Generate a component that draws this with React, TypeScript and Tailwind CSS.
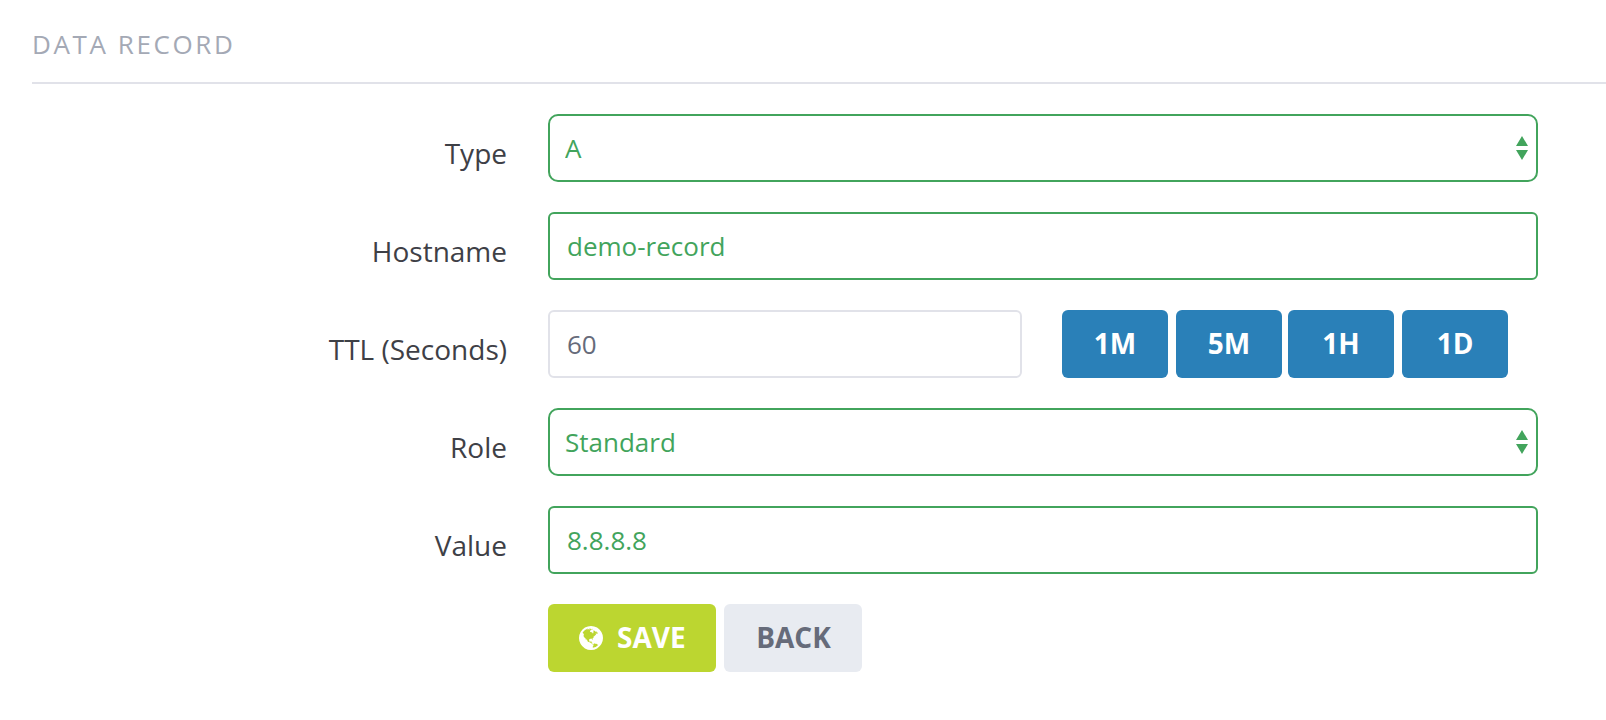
import type { ReactNode } from 'react';

const GLOBE =
  'M896 128q209 0 385.5 103t279.5 279.5 103 385.5-103 385.5-279.5 279.5-385.5 103-385.5-103-279.5-279.5-103-385.5 103-385.5 279.5-279.5 385.5-103zm274 521q-2 1-9.5 9.5t-13.5 9.5q2 0 4.5-5t5-11 3.5-7q6-7 22-15 14-6 52-12 34-8 51 11-2-2 9.5-13t14.5-12q3-2 15-4.5t15-7.5l2-22q-12 1-17.5-7t-6.5-21q0 2-6 8 0-7-4.5-8t-11.5 1-9 1q-10-3-15-7.5t-8-16.5-4-15q-2-5-9.5-11t-9.5-10q-1-2-2.5-5.5t-3-6.5-4-5.5-5.5-2.5-7 5-7.5 10-4.5 5q-3-2-6-1.5t-4.5 1-4.5 3-5 3.5q-3 2-8.5 3t-8.5 2q15-5-1-11-10-4-16-3 9-4 7.5-12t-8.5-14h5q-1-4-8.5-8.5t-17.5-8.5-13-6q-8-5-34-9.5t-33-.5q-5 6-4.5 10.5t4 14 3.5 12.5q1 6-5.5 13t-6.5 12q0 7 14 15.5t10 21.5q-3 8-16 16t-16 12q-5 8-1.5 18.5t10.5 16.5q2 2 1.5 4t-3.5 4.5-5.5 4-6.5 3.5l-3 2q-11 5-20.5-6t-13.5-26q-7-25-16-30-23-8-29 1-5-13-41-26-25-9-58-4 6-1 0-15-7-15-19-12 3-6 4-17.5t1-13.5q3-13 12-23 1-1 7-8.5t9.5-13.5.5-6q35 4 50-11 5-5 11.5-17t10.5-17q9-6 14-5.5t14.5 5.5 14.5 5q14 1 15.5-11t-7.5-20q12 1 3-17-4-7-8-9-12-4-27 5-8 4 2 8-1-1-9.5 10.5t-16.5 17.5-16-5q-1-1-5.5-13.5t-9.5-13.5q-8 0-16 15 3-8-11-15t-24-8q19-12-8-27-7-4-20.5-5t-19.5 4q-5 7-5.5 11.5t5 8 10.5 5.5 11.5 4 8.5 3q14 10 8 14-2 1-8.5 3.5t-11.5 4.5-6 4q-3 4 0 14t-2 14q-5-5-9-17.5t-7-16.5q7 9-25 6l-10-1q-4 0-16 2t-20.5 1-13.5-8q-4-8 0-20 1-4 4-2-4-3-11-9.5t-10-8.5q-46 15-94 41 6 1 12-1 5-2 13-6.5t10-5.5q34-14 42-7l5-5q14 16 20 25-7-4-30-1-20 6-22 12 7 12 5 18-4-3-11.5-10t-14.5-11-15-5q-16 0-22 1-146 80-235 222 7 7 12 8 4 1 5 9t2.5 11 11.5-3q9 8 3 19 1-1 44 27 19 17 21 21 3 11-10 18-1-2-9-9t-9-4q-3 5 .5 18.5t10.5 12.5q-7 0-9.5 16t-2.5 35.5-1 23.5l2 1q-3 12 5.5 34.5t21.5 19.5q-13 3 20 43 6 8 8 9 3 2 12 7.5t15 10 10 10.5q4 5 10 22.5t14 23.5q-2 6 9.5 20t10.5 23q-1 0-2.5 1t-2.5 1q3 7 15.5 14t15.5 13q1 3 2 10t3 11 8 2q2-20-24-62-15-25-17-29-3-5-5.5-15.5t-4.5-14.5q2 0 6 1.5t8.5 3.5 7.5 4 2 3q-3 7 2 17.5t12 18.5 17 19 12 13q6 6 14 19.5t0 13.5q9 0 20 10.5t17 19.5q5 8 8 26t5 24q2 7 8.5 13.5t12.5 9.5l16 8 13 7q5 2 18.5 10.5t21.5 11.5q10 4 16 4t14.5-2.5 13.5-3.5q15-2 29 15t21 21q36 19 55 11-2 1 .5 7.5t8 15.5 9 14.5 5.5 8.5q5 6 18 15t18 15q6-4 7-9-3 8 7 20t18 10q14-3 14-32-31 15-49-18 0-1-2.5-5.5t-4-8.5-2.5-8.5 0-7.5 5-3q9 0 10-3.5t-2-12.5-4-13q-1-8-11-20t-12-15q-5 9-16 8t-16-9q0 1-1.5 5.5t-1.5 6.5q-13 0-15-1 1-3 2.5-17.5t3.5-22.5q1-4 5.5-12t7.5-14.5 4-12.5-4.5-9.5-17.5-2.5q-19 1-26 20-1 3-3 10.5t-5 11.5-9 7q-7 3-24 2t-24-5q-13-8-22.5-29t-9.5-37q0-10 2.5-26.5t3-25-5.5-24.5q3-2 9-9.5t10-10.5q2-1 4.5-1.5t4.5 0 4-1.5 3-6q-1-1-4-3-3-3-4-3 7 3 28.5-1.5t27.5 1.5q15 11 22-2 0-1-2.5-9.5t-.5-13.5q5 27 29 9 3 3 15.5 5t17.5 5q3 2 7 5.5t5.5 4.5 5-.5 8.5-6.5q10 14 12 24 11 40 19 44 7 3 11 2t4.5-9.5 0-14-1.5-12.5l-1-8v-18l-1-8q-15-3-18.5-12t1.5-18.5 15-18.5q1-1 8-3.5t15.5-6.5 12.5-8q21-19 15-35 7 0 11-9-1 0-5-3t-7.5-5-4.5-2q9-5 2-16 5-3 7.5-11t7.5-10q9 12 21 2 7-8 1-16 5-7 20.5-10.5t18.5-9.5q7 2 8-2t1-12 3-12q4-5 15-9t13-5l17-11q3-4 0-4 18 2 31-11 10-11-6-20 3-6-3-9.5t-15-5.5q3-1 11.5-.5t10.5-1.5q15-10-7-16-17-5-43 12zm-163 877q206-36 351-189-3-3-12.5-4.5t-12.5-3.5q-18-7-24-8 1-7-2.5-13t-8-9-12.5-8-11-7q-2-2-7-6t-7-5.5-7.5-4.5-8.5-2-10 1l-3 1q-3 1-5.5 2.5t-5.5 3-4 3 0 2.5q-21-17-36-22-5-1-11-5.5t-10.5-7-10-1.5-11.5 7q-5 5-6 15t-2 13q-7-5 0-17.5t2-18.5q-3-6-10.5-4.5t-12 4.5-11.5 8.5-9 6.5-8.5 5.5-8.5 7.5q-3 4-6 12t-5 11q-2-4-11.5-6.5t-9.5-5.5q2 10 4 35t5 38q7 31-12 48-27 25-29 40-4 22 12 26 0 7-8 20.5t-7 21.5q0 6 2 16z';

function Row({ label, htmlFor, children }: { label: string; htmlFor: string; children: ReactNode }) {
  return (
    <div className="flex h-[68px]">
      <label htmlFor={htmlFor} className="w-[507px] shrink-0 pt-[19px] text-right text-[28px] leading-10 text-[#3e4046]">
        {label}
      </label>
      <div className="ml-[41px] flex">{children}</div>
    </div>
  );
}

function SelectField({ id, value }: { id: string; value: string }) {
  return (
    <div className="grid w-[990px]">
      <select
        id={id}
        defaultValue={value}
        className="col-start-1 row-start-1 h-[68px] w-full appearance-none rounded-[10px] border-2 border-[#42a45c] bg-white pr-10 pl-[15px] text-[26px] text-[#42a45c] outline-none"
      >
        <option>{value}</option>
      </select>
      <svg
        viewBox="0 0 12 24"
        className="pointer-events-none col-start-1 row-start-1 mr-2.5 h-6 w-3 self-center justify-self-end fill-[#42a45c]"
      >
        <path d="M6 0 12 10H0zM6 24 0 14h12z" />
      </svg>
    </div>
  );
}

function TextField({ id, value }: { id: string; value: string }) {
  return (
    <input
      id={id}
      defaultValue={value}
      className="h-[68px] w-[990px] rounded-md border-2 border-[#42a45c] bg-white px-[17px] text-[26px] text-[#42a45c] outline-none"
    />
  );
}

function Preset({ children, className = '' }: { children: ReactNode; className?: string }) {
  return (
    <button
      type="button"
      className={`h-[68px] w-[106px] rounded-md bg-[#2a80b8] pb-0.5 text-[28px] font-bold text-white ${className}`}
    >
      {children}
    </button>
  );
}

export default function App() {
  return (
    <div className="h-[720px] w-full overflow-hidden bg-white font-['Open_Sans',sans-serif]">
      <h2 className="ml-8 h-[84px] border-b-2 border-[#e1e2e9] pt-6 text-[26px] leading-10 font-normal tracking-[2.6px] text-[#a4a9b5]">
        DATA RECORD
      </h2>
      <form className="mt-[30px] flex flex-col gap-[30px]">
        <Row label="Type" htmlFor="type">
          <SelectField id="type" value="A" />
        </Row>
        <Row label="Hostname" htmlFor="hostname">
          <TextField id="hostname" value="demo-record" />
        </Row>
        <Row label="TTL (Seconds)" htmlFor="ttl">
          <input
            id="ttl"
            defaultValue="60"
            className="h-[68px] w-[474px] rounded-md border-2 border-[#e1e2e9] bg-white px-[17px] text-[26px] text-[#666b7a] outline-none"
          />
          <Preset className="ml-10">1M</Preset>
          <Preset className="ml-2">5M</Preset>
          <Preset className="ml-1.5">1H</Preset>
          <Preset className="ml-2">1D</Preset>
        </Row>
        <Row label="Role" htmlFor="role">
          <SelectField id="role" value="Standard" />
        </Row>
        <Row label="Value" htmlFor="value">
          <TextField id="value" value="8.8.8.8" />
        </Row>
        <div className="ml-[548px] flex gap-2">
          <button
            type="button"
            className="flex h-[68px] w-[168px] items-center rounded-md bg-[#bcd630] pl-[31px] text-[28px] font-bold text-white"
          >
            <svg viewBox="128 128 1536 1536" className="mr-3.5 size-6 fill-current">
              <path d={GLOBE} />
            </svg>
            <span className="pb-0.5">SAVE</span>
          </button>
          <button
            type="button"
            className="h-[68px] w-[138px] rounded-md bg-[#e8ebf1] pb-0.5 pl-px text-[28px] font-bold text-[#666b7a]"
          >
            BACK
          </button>
        </div>
      </form>
    </div>
  );
}
